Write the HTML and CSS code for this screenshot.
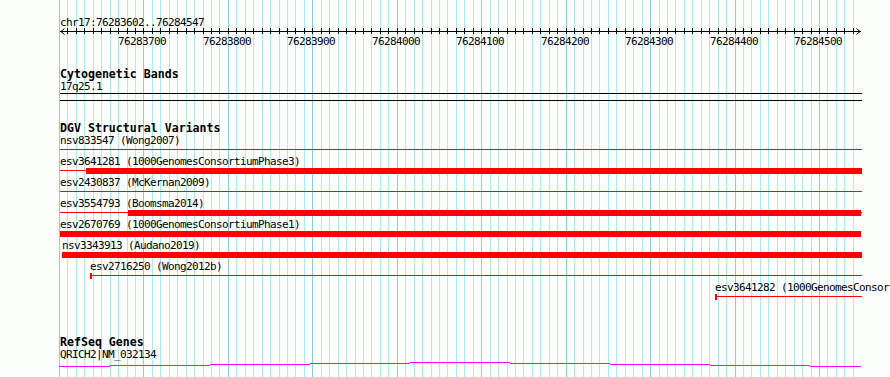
FILE: index.html
```html
<!DOCTYPE html>
<html lang="en">
<head>
<meta charset="utf-8">
<title>Genome browser</title>
<link rel="stylesheet" href="styles.css">
</head>
<body>
<div class="browser">
  <div class="grid" aria-hidden="true">
    <div class="gl major first" style="left:59px"></div>
    <div class="gl" style="left:67px"></div>
    <div class="gl" style="left:76px"></div>
    <div class="gl" style="left:84px"></div>
    <div class="gl" style="left:93px"></div>
    <div class="gl" style="left:101px"></div>
    <div class="gl" style="left:110px"></div>
    <div class="gl" style="left:118px"></div>
    <div class="gl" style="left:127px"></div>
    <div class="gl" style="left:135px"></div>
    <div class="gl major" style="left:143px"></div>
    <div class="gl" style="left:152px"></div>
    <div class="gl" style="left:160px"></div>
    <div class="gl" style="left:169px"></div>
    <div class="gl" style="left:177px"></div>
    <div class="gl" style="left:186px"></div>
    <div class="gl" style="left:194px"></div>
    <div class="gl" style="left:203px"></div>
    <div class="gl" style="left:211px"></div>
    <div class="gl" style="left:219px"></div>
    <div class="gl major" style="left:228px"></div>
    <div class="gl" style="left:236px"></div>
    <div class="gl" style="left:245px"></div>
    <div class="gl" style="left:253px"></div>
    <div class="gl" style="left:262px"></div>
    <div class="gl" style="left:270px"></div>
    <div class="gl" style="left:279px"></div>
    <div class="gl" style="left:287px"></div>
    <div class="gl" style="left:295px"></div>
    <div class="gl" style="left:304px"></div>
    <div class="gl major" style="left:312px"></div>
    <div class="gl" style="left:321px"></div>
    <div class="gl" style="left:329px"></div>
    <div class="gl" style="left:338px"></div>
    <div class="gl" style="left:346px"></div>
    <div class="gl" style="left:355px"></div>
    <div class="gl" style="left:363px"></div>
    <div class="gl" style="left:371px"></div>
    <div class="gl" style="left:380px"></div>
    <div class="gl" style="left:388px"></div>
    <div class="gl major" style="left:397px"></div>
    <div class="gl" style="left:405px"></div>
    <div class="gl" style="left:414px"></div>
    <div class="gl" style="left:422px"></div>
    <div class="gl" style="left:431px"></div>
    <div class="gl" style="left:439px"></div>
    <div class="gl" style="left:447px"></div>
    <div class="gl" style="left:456px"></div>
    <div class="gl" style="left:464px"></div>
    <div class="gl" style="left:473px"></div>
    <div class="gl major" style="left:481px"></div>
    <div class="gl" style="left:490px"></div>
    <div class="gl" style="left:498px"></div>
    <div class="gl" style="left:507px"></div>
    <div class="gl" style="left:515px"></div>
    <div class="gl" style="left:523px"></div>
    <div class="gl" style="left:532px"></div>
    <div class="gl" style="left:540px"></div>
    <div class="gl" style="left:549px"></div>
    <div class="gl" style="left:557px"></div>
    <div class="gl major" style="left:566px"></div>
    <div class="gl" style="left:574px"></div>
    <div class="gl" style="left:583px"></div>
    <div class="gl" style="left:591px"></div>
    <div class="gl" style="left:599px"></div>
    <div class="gl" style="left:608px"></div>
    <div class="gl" style="left:616px"></div>
    <div class="gl" style="left:625px"></div>
    <div class="gl" style="left:633px"></div>
    <div class="gl" style="left:642px"></div>
    <div class="gl major" style="left:650px"></div>
    <div class="gl" style="left:659px"></div>
    <div class="gl" style="left:667px"></div>
    <div class="gl" style="left:675px"></div>
    <div class="gl" style="left:684px"></div>
    <div class="gl" style="left:692px"></div>
    <div class="gl" style="left:701px"></div>
    <div class="gl" style="left:709px"></div>
    <div class="gl" style="left:718px"></div>
    <div class="gl" style="left:726px"></div>
    <div class="gl major" style="left:735px"></div>
    <div class="gl" style="left:743px"></div>
    <div class="gl" style="left:751px"></div>
    <div class="gl" style="left:760px"></div>
    <div class="gl" style="left:768px"></div>
    <div class="gl" style="left:777px"></div>
    <div class="gl" style="left:785px"></div>
    <div class="gl" style="left:794px"></div>
    <div class="gl" style="left:802px"></div>
    <div class="gl" style="left:811px"></div>
    <div class="gl major" style="left:819px"></div>
    <div class="gl" style="left:827px"></div>
    <div class="gl" style="left:836px"></div>
    <div class="gl" style="left:844px"></div>
    <div class="gl" style="left:853px"></div>
  </div>

  <div class="content">
    <div class="locus">chr17:76283602..76284547</div>

    <div class="ruler">
      <svg class="axis" width="802" height="7" viewBox="0 0 802 7" aria-hidden="true">
        <rect x="0" y="3" width="801" height="1" fill="#000"/>
        <path d="M4.5 0.5 L1 3.5 L4.5 6.5" fill="none" stroke="#000" stroke-width="1"/>
        <path d="M796.5 0.5 L800 3.5 L796.5 6.5" fill="none" stroke="#000" stroke-width="1"/>
      </svg>
      <div class="tick-labels">
        <span class="tick-label" style="left:118px">76283700</span>
        <span class="tick-label" style="left:203px">76283800</span>
        <span class="tick-label" style="left:287px">76283900</span>
        <span class="tick-label" style="left:372px">76284000</span>
        <span class="tick-label" style="left:456px">76284100</span>
        <span class="tick-label" style="left:541px">76284200</span>
        <span class="tick-label" style="left:625px">76284300</span>
        <span class="tick-label" style="left:710px">76284400</span>
        <span class="tick-label" style="left:794px">76284500</span>
      </div>
    </div>

    <section class="track track-cyto">
      <h2 class="track-title">Cytogenetic Bands</h2>
      <div class="track-area">
        <div class="plain-label">17q25.1</div>
        <div class="band"></div>
      </div>
    </section>

    <section class="track track-dgv">
      <h2 class="track-title">DGV Structural Variants</h2>
      <div class="track-area">
        <div class="sv-row">
          <div class="feat">
            <div class="feat-label">nsv833547 (Wong2007)</div>
            <div class="glyph"><span class="thin grow"></span></div>
          </div>
        </div>
        <div class="sv-row">
          <div class="feat">
            <div class="feat-label">esv3641281 (1000GenomesConsortiumPhase3)</div>
            <div class="glyph"><span class="thin" style="width:26px"></span><span class="thick"></span></div>
          </div>
        </div>
        <div class="sv-row">
          <div class="feat">
            <div class="feat-label">esv2430837 (McKernan2009)</div>
            <div class="glyph"><span class="thin grow"></span></div>
          </div>
        </div>
        <div class="sv-row">
          <div class="feat">
            <div class="feat-label">esv3554793 (Boomsma2014)</div>
            <div class="glyph"><span class="thin" style="width:68px"></span><span class="thick"></span><span class="thin" style="width:1px"></span></div>
          </div>
        </div>
        <div class="sv-row">
          <div class="feat">
            <div class="feat-label">esv2670769 (1000GenomesConsortiumPhase1)</div>
            <div class="glyph"><span class="thick"></span><span class="gap"></span></div>
          </div>
        </div>
        <div class="sv-row">
          <div class="feat" style="margin-left:2px">
            <div class="feat-label">nsv3343913 (Audano2019)</div>
            <div class="glyph"><span class="thick"></span></div>
          </div>
        </div>
        <div class="sv-row">
          <div class="feat" style="margin-left:30px">
            <div class="feat-label">esv2716250 (Wong2012b)</div>
            <div class="glyph"><span class="cap"></span><span class="thin grow"></span></div>
          </div>
        </div>
        <div class="sv-row">
          <div class="feat" style="margin-left:655px">
            <div class="feat-label">esv3641282 (1000GenomesConsortiumPhase3)</div>
            <div class="glyph"><span class="cap"></span><span class="thin grow"></span></div>
          </div>
        </div>
      </div>
    </section>

    <section class="track track-refseq">
      <h2 class="track-title">RefSeq Genes</h2>
      <div class="track-area">
        <div class="plain-label">QRICH2|NM_032134</div>
        <svg class="gene" width="803" height="7" viewBox="0 0 803 7" shape-rendering="crispEdges" aria-hidden="true">
          <g fill="#ff00ff">
            <rect x="0" y="5" width="51" height="1"/>
            <rect x="51" y="4" width="100" height="1"/>
            <rect x="151" y="3" width="100" height="1"/>
            <rect x="251" y="2" width="100" height="1"/>
            <rect x="351" y="1" width="100" height="1"/>
            <rect x="451" y="2" width="100" height="1"/>
            <rect x="551" y="3" width="100" height="1"/>
            <rect x="651" y="4" width="100" height="1"/>
            <rect x="751" y="5" width="51" height="1"/>
          </g>
        </svg>
      </div>
    </section>
  </div>
</div>
</body>
</html>
```

FILE: styles.css
```css
html, body {
  margin: 0;
  padding: 0;
  overflow: hidden;
  background: #fcfefc;
}

.browser {
  position: relative;
  width: 890px;
  height: 377px;
  overflow: hidden;
  font-family: "DejaVu Sans Mono", "Liberation Mono", monospace;
  font-size: 11px;
  letter-spacing: -0.62px;
  color: #000;
}

/* grid lines (canvas) */
.grid {
  position: absolute;
  inset: 0;
}
.gl {
  position: absolute;
  top: 0;
  bottom: 0;
  width: 1px;
  background: #ade9ed;
}
.gl.major {
  background: #8ccbea;
}
.gl::before {
  content: "";
  position: absolute;
  left: 0;
  top: 28px;
  width: 1px;
  height: 6px;
  background: #000;
}
.gl.first::before {
  display: none;
}

.content {
  position: relative;
}

.locus {
  margin-top: 16px;
  height: 12px;
  line-height: 13px;
  padding-left: 60px;
  white-space: nowrap;
}

.ruler {
  height: 39px;
}
.axis {
  display: block;
  margin-left: 60px;
}
.tick-labels {
  position: relative;
  height: 32px;
  line-height: 13px;
}
.tick-label {
  position: absolute;
  top: 0;
  white-space: nowrap;
}

.track-title {
  margin: 0;
  padding-left: 60px;
  font-size: 11.6px;
  letter-spacing: 0;
  font-weight: bold;
  line-height: 14px;
  white-space: nowrap;
}

.track-area {
  margin-left: 60px;
  width: 802px;
}

.plain-label {
  height: 12px;
  line-height: 12px;
  white-space: nowrap;
}

.track-cyto .band {
  height: 6px;
  border-top: 1px solid #000;
  border-bottom: 1px solid #000;
}

.track-dgv {
  margin-top: 20px;
}

.sv-row {
  height: 21px;
}
.feat-label {
  height: 12px;
  line-height: 12px;
  white-space: nowrap;
}
.glyph {
  display: flex;
  align-items: flex-start;
  height: 6px;
}
.thin {
  display: block;
  height: 1px;
  margin-top: 2px;
  background: #ff0000;
  flex: none;
}
.thin.grow {
  flex: 1;
}
.thick {
  display: block;
  flex: 1;
  height: 6px;
  background: #ff0000;
}
.cap {
  display: block;
  flex: none;
  width: 2px;
  height: 6px;
  background: #ff0000;
}
.gap {
  display: block;
  flex: none;
  width: 1px;
}

.track-refseq {
  margin-top: 33px;
}
.track-refseq .track-title {
  line-height: 13px;
}
.gene {
  display: block;
  margin-left: -1px;
}
```
